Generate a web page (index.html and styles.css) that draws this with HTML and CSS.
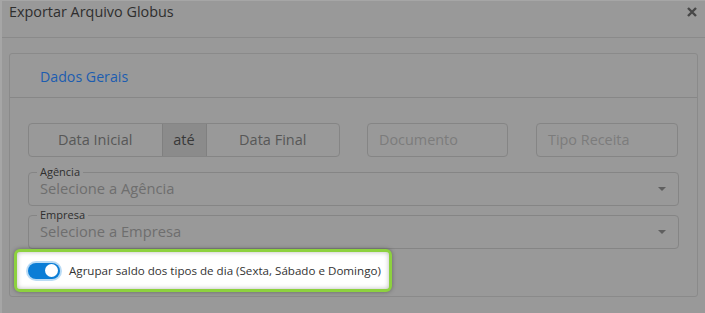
FILE: index.html
```html
<!DOCTYPE html>
<html lang="pt">
<head>
<meta charset="utf-8">
<link rel="stylesheet" href="styles.css">
</head>
<body>
<div class="modal">
  <div class="modal-header">
    <span class="modal-title">Exportar Arquivo Globus</span>
    <svg class="close" width="10" height="10" viewBox="0 0 10 10"><path d="M1 1L9 9M9 1L1 9" stroke="#474747" stroke-width="2.4" stroke-linecap="butt"/></svg>
  </div>
  <div class="modal-body">
    <div class="panel">
      <div class="panel-heading">Dados Gerais</div>
      <div class="panel-body">
        <div class="row">
          <div class="date-group">
            <div class="date-cell">Data Inicial</div>
            <div class="addon">até</div>
            <div class="date-cell">Data Final</div>
          </div>
          <div class="input">Documento</div>
          <div class="input">Tipo Receita</div>
        </div>
        <div class="select">
          <span class="legend">Agência</span>
          <span class="placeholder">Selecione a Agência</span>
          <span class="caret"></span>
        </div>
        <div class="select">
          <span class="legend">Empresa</span>
          <span class="placeholder">Selecione a Empresa</span>
          <span class="caret"></span>
        </div>
        <div class="highlight">
          <span class="switch"><span class="knob"></span></span>
          <span class="switch-label">Agrupar saldo dos tipos de dia (Sexta, Sábado e Domingo)</span>
        </div>
      </div>
    </div>
  </div>
</div>
</body>
</html>
```
FILE: styles.css
```css
html, body {
  margin: 0;
  padding: 0;
}
body {
  background: #a6a6a6;
  font-family: "Open Sans", "Noto Sans", sans-serif;
  width: 705px;
  height: 313px;
  overflow: hidden;
}
.modal {
  margin-left: 2px;
  margin-top: 1px;
  background: #999999;
  height: 312px;
}
.modal-header {
  height: 36px;
  border-bottom: 1px solid #8a8a8a;
  display: flex;
  align-items: flex-start;
  justify-content: space-between;
  padding: 0 8px 0 7px;
}
.modal-title {
  font-size: 14.4px;
  line-height: 22px;
  color: #2e2e2e;
}
.close {
  margin-top: 6px;
}
.modal-body {
  padding: 15px 7px 0 7px;
}
.panel {
  border: 1px solid #8a8a8a;
  border-radius: 3px;
  height: 244px;
  box-sizing: border-box;
}
.panel-heading {
  height: 43px;
  border-bottom: 1px solid #878787;
  padding-left: 30px;
  font-size: 14.2px;
  line-height: 45px;
  color: #1c5db0;
}
.panel-body {
  padding: 25px 18px 0 18px;
}
.row {
  display: grid;
  grid-template-columns: 312px 141px 143px;
  column-gap: 27px;
  height: 34px;
}
.row > :last-child {
  margin-left: 1px;
}
.date-group {
  display: flex;
  border: 1px solid #858585;
  border-radius: 4px;
  overflow: hidden;
}
.date-cell {
  flex: 1;
  text-align: center;
  font-size: 14.5px;
  line-height: 32px;
  color: #575757;
}
.addon {
  width: 43px;
  background: #8b8b8b;
  border-left: 1px solid #808080;
  border-right: 1px solid #808080;
  text-align: center;
  font-size: 14.5px;
  line-height: 32px;
  color: #383838;
}
.input {
  border: 1px solid #858585;
  border-radius: 4px;
  padding-left: 11px;
  font-size: 14.4px;
  line-height: 32px;
  color: #7c7c7c;
}
.select {
  margin-top: 15px;
  padding: 0 0 0 11px;
  border: 1px solid #858585;
  border-radius: 4px;
  height: 34px;
  box-sizing: border-box;
  position: relative;
  display: flex;
  align-items: center;
}
.select + .select {
  margin-top: 9px;
}
.legend {
  position: absolute;
  left: 8px;
  top: -7px;
  font-size: 11px;
  line-height: 12px;
  color: #2e2e2e;
  padding: 0 3px;
  background: #999999;
}
.placeholder {
  font-size: 14.7px;
  color: #6e6e6e;
  margin-top: -3px;
}
.caret {
  margin-left: auto;
  margin-right: 12px;
  width: 0;
  height: 0;
  border-left: 4px solid transparent;
  border-right: 4px solid transparent;
  border-top: 4px solid #5f5f5f;
}
.highlight {
  position: relative;
  margin: 0 0 0 -14px;
  width: 378px;
  height: 43px;
  box-sizing: border-box;
  border: 3px solid #8dd13f;
  border-radius: 6px;
  background: #ffffff;
  box-shadow: inset 0 0 5px rgba(0, 0, 0, 0.28), 0 0 4px rgba(0, 0, 0, 0.35);
  display: flex;
  align-items: center;
  padding-left: 11px;
}
.switch {
  flex-shrink: 0;
  width: 32px;
  height: 16px;
  border-radius: 8px;
  background: #0a7dd6;
  box-shadow: 0 0 0 2px #b9dbf5;
  display: flex;
  align-items: center;
  justify-content: flex-end;
  padding-right: 2px;
  box-sizing: border-box;
}
.knob {
  width: 13px;
  height: 13px;
  border-radius: 50%;
  background: #ffffff;
}
.switch-label {
  margin-left: 9px;
  font-size: 11.6px;
  color: #333333;
  white-space: nowrap;
}
```
